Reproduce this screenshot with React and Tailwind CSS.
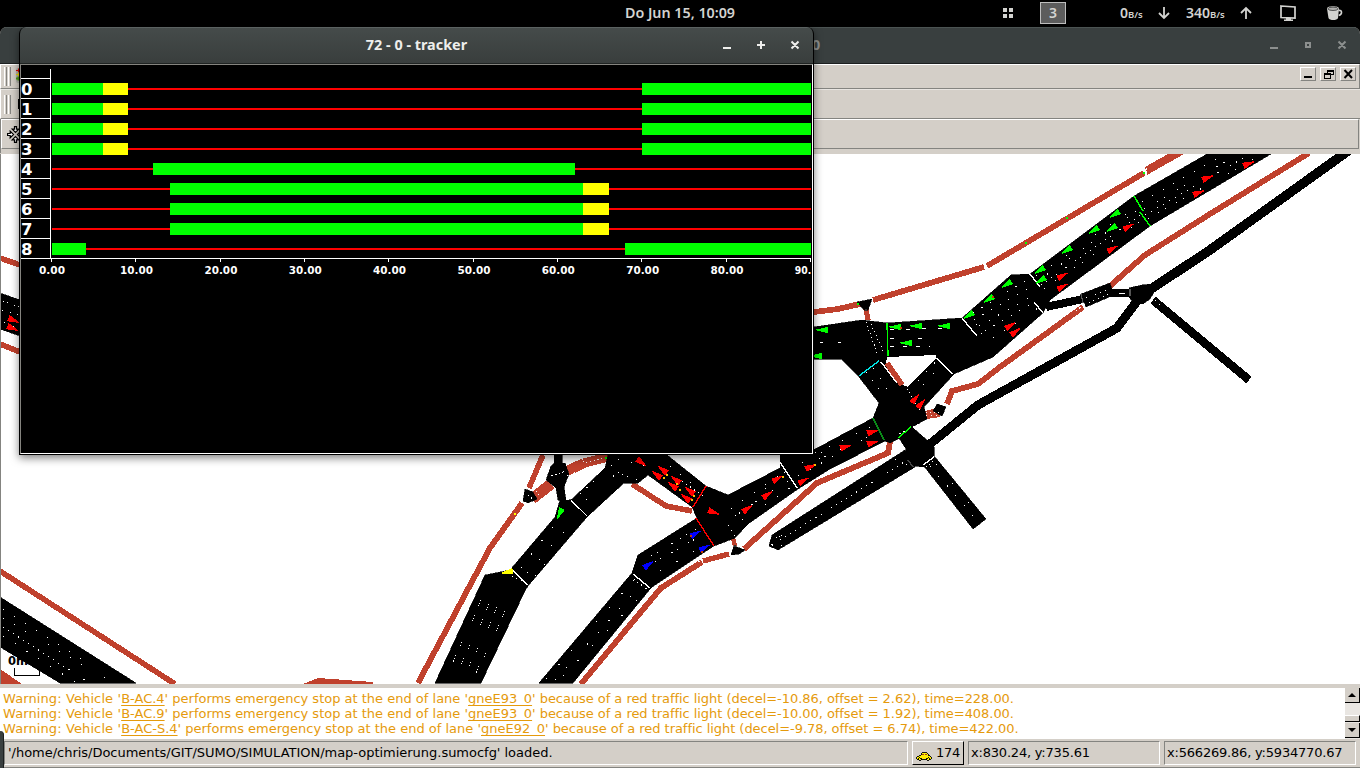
const BIKE = '#c0412d';

const bikeLines = [
  ['1144,173 987,266', 5.8], ['984,267 873,300', 5.8], ['860,304 838,309 814,312', 5.8], ['866,309 868,320', 5.2],
  ['1309,153 1210,214 1145,255 1110,286', 5.8], ['1083,307 1000,367 978,384 952,391 947,404', 5.8],
  ['886,363 902,385', 5.6], ['890,442 888,453 817,483 744,549', 5.8], ['733,538 735,546', 4.5],
  ['729,554 703,561', 5.4], ['702,562 661,588 640,613 581,684', 5.8],
  ['632,484 666,506 692,511', 5.6], ['543,455 529,488', 5.6],
  ['522,503 490,548 468,589 418,683', 5.8], ['532,499 551,484', 11], ['567,471 584,463', 10], ['584,463 608,457', 9],
  ['0,571 175,684', 5.6], ['0,258 20,265', 5.6], ['0,344 20,352', 5.6],
];

const roads = [
  '1207,154 1134,196 1030,274 1011,275 962,318 887,323 862,320 814,327 814,359 841,359 859,377 879,403 873,418 780,468 728,495 706,486 667,455 608,455 605,468 572,499 569,500 560,500 555,517 510,570 485,575 435,683 481,683 525,591 528,586 587,517 624,483 638,483 648,475 692,507 697,518 638,555 632,573 539,683 573,683 651,588 658,583 700,555 714,546 735,538 748,524 798,489 830,469 885,441 890,443 900,438 912,427 927,419 924,407 954,374 993,357 1043,313 1050,300 1150,226 1271,154',
  '780,468 780,454 814,449 814,454',
  '899,438 912,427 928,441 934,447 934,457 924,467 913,466 904,456 906,449',
  '1129,288 1142,285 1152,284 1154,292 1150,299 1143,304 1133,302 1129,297',
  '1081,294 1110,283 1114,295 1086,307',
  '772,535 905,450 915,467 778,550 769,546',
  '923,465 935,457 986,519 973,529',
  '857,302 872,299 868,310 864,310',
  '933,411 937,404 946,407 942,416',
  '525,489 533,492 537,499 528,503 523,501',
  '554,455 562,455 562,463 565,463 569,474 564,487 566,500 558,500 556,488 546,480 551,466 554,463',
  '734,546 745,550 739,554 731,555',
  '0,597 136,683 60,683 0,647',
  '0,293 20,300 20,336 0,329',
];

const thinRoads = [
  ['930,444 978,405 1117,328 1138,300', 9], ['1148,291 1210,250 1348,151', 9.5],
  ['1153,300 1249,380', 8.5], ['1046,307 1083,299', 8], ['1110,293 1131,293', 8.5],
];

/* Lane markings: points and dash pattern */
const lanes = [
  ['1142,202 1220,157', '1 11'], ['1144,209 1235,156', '1 14 1 7'], ['1145,215 1245,157', '1 6'], ['1148,219 1255,158', '1 11 1 7'],
  ['1036,276 1136,207', '1 17'], ['1039,280 1138,210', '1 9 1 16'], ['1041,285 1142,214', '1 5'], ['1044,289 1144,219', '1 13 1 8'],
  ['973,313 1025,281', '1 9'], ['974,320 1030,287', '1 9'], ['979,326 1036,294', '1 10'], ['985,331 1036,301', '1 9'], ['993,338 1038,308', '1 12'],
  ['972,315 982,335', '1 4'], ['866,322 877,353', '1 3'], ['871,324 884,353', '1 3'],
  ['820,343 855,342', '3 15'], ['890,330 942,328', '4 12'], ['890,339 945,338', '4 24'], ['890,347 930,346', '4 9'],
  ['866,372 884,396', '1 9'], ['873,368 890,393', '1 11'], ['907,389 922,413', '1 3'], ['918,381 940,357', '1 11'], ['923,385 944,363', '1 14'],
  ['815,453 876,425', '1 14'], ['819,459 880,432', '1 5 1 16'], ['899,434 925,421', '2 3'],
  ['787,482 838,454', '1 12'], ['784,473 830,448', '1 20'],
  ['731,509 781,474', '1 13'], ['735,516 788,480', '1 4 1 14'], ['742,520 794,485', '1 13'],
  ['728,525 735,537', '1 5'], ['651,556 700,527', '1 6 1 9'], ['655,562 704,534', '1 5 1 12'], ['660,571 709,543', '1 18'],
  ['633,580 650,591', '1 4'], ['546,679 635,579', '1 18'], ['555,680 642,584', '1 15'], ['563,676 648,589', '1 20'],
  ['512,576 526,583', '1 4'], ['521,568 560,517', '1 16'], ['527,573 575,519', '1 17'], ['535,576 548,560', '1 13'],
  ['580,494 599,476', '1 8'], ['586,500 616,474', '1 17'],
  ['481,600 478,606', '1 2'], ['489,604 486,610', '1 2'], ['497,607 494,613', '1 2'], ['505,611 502,617', '1 2'],
  ['475,615 472,621', '1 2'], ['483,619 480,625', '1 2'], ['491,622 488,628', '1 2'], ['499,625 496,631', '1 2'],
  ['462,642 460,646', '1 2'], ['470,645 468,649', '1 2'], ['478,648 476,654', '1 2'], ['486,653 484,657', '1 2'],
  ['456,655 453,662', '1 2'], ['464,658 461,664', '1 2'], ['471,662 469,668', '1 2'], ['479,666 476,673', '1 2'],
  ['611,465 620,474 638,480', '1 4'], ['618,459 650,467', '1 12'], ['551,476 566,471', '2 2'], ['528,495 534,500', '1 3'],
  ['567,476 584,469', '1 3'], ['586,463 606,457', '1 3'],
  ['780,540 906,461', '1 5'], ['776,538 782,535', '1 2'], ['781,546 786,543', '1 2'],
  ['895,459 908,465', '1 3'], ['926,467 934,461', '1 3'], ['930,466 975,518', '1 12'], ['936,464 980,516', '1 24'],
  ['3,609 118,682', '1 12'], ['3,618 112,682', '1 12'], ['3,627 88,682', '1 5'], ['3,636 75,682', '1 13'],
  ['1086,298 1110,289', '1 4'], ['1089,303 1111,293', '1 4'], ['1119,293 1126,293', '6 9'], ['1155,300 1160,305', '2 3'],
  ['3,301 19,307', '1 3'], ['2,310 19,315', '1 7'], ['4,322 18,328', '1 4'],
  ['670,466 700,490', '1 12'], ['682,481 703,496', '1 4'], ['765,489 785,472', '1 17'],
];

const R = '#ff0000';
const G = '#00ff00';
const B = '#0000ff';
const cars = [
  [1248, 164, -22, R], [1207, 178, -22, R], [1198, 193, -22, R], [1128, 227, -30, R], [1112, 249, -30, R], [1062, 276, -30, R], [1062, 287, -30, R],
  [1010, 326, -33, R], [1015, 332, -38, R], [1115, 214, 147, G], [1094, 230, 147, G], [1112, 228, 147, G], [1067, 250, 147, G], [1040, 270, 147, G],
  [1041, 280, 147, G], [1007, 284, 147, G], [989, 299, 147, G], [969, 315, 147, G],
  [823, 330, 180, G], [817, 356, 180, G], [896, 327, 180, G], [917, 326, 180, G], [945, 326, 180, G], [907, 343, 180, G],
  [915, 399, -50, R], [921, 404, -50, R], [872, 432, -18, R], [872, 443, -18, R], [845, 447, -18, R], [810, 467, -25, R],
  [803, 481, -30, R], [777, 479, -30, R], [767, 495, -35, R], [747, 509, -35, R], [713, 512, 20, R],
  [641, 462, 38, R], [663, 470, 218, R], [657, 475, 218, R], [676, 480, 218, R], [673, 486, 218, R], [690, 491, 218, R], [686, 498, 218, R],
  [695, 534, -30, B], [704, 548, -30, B], [648, 565, -35, B], [560, 513, 115, G], [508, 572, 168, '#ffff00'],
  [13, 320, 22, R], [12, 328, 22, R],
];

const stopLines = [
  ['1030,274 1040,287', '#fff'], ['1034,302 1043,313', '#fff'], ['962,318 977,336', '#fff'], ['936,358 953,374', '#fff'],
  ['1134,196 1143,211', G], ['1140,212 1150,226', G], ['887,323 888,356', G], ['859,376 879,361', '#00e5e5'],
  ['873,418 884,440', '#0a8a18'], ['898,438 911,427', G], ['780,462 797,488', '#fff'], ['706,486 693,507', R], ['696,518 714,546', R],
  ['571,500 587,516', '#fff'], ['512,570 528,585', '#fff'], ['633,574 650,588', '#fff'], ['923,465 934,457', '#fff'],
  ['881,362 897,383', '#fff'], ['1081,294 1083,303', '#555'], ['1130,289 1130,296', '#555'], ['908,460 913,467', '#444'],
];

const dots = [
  [1144, 173, G], [1067, 218, G], [1026, 243, G], [858, 304, G], [606, 458, G], [515, 514, '#ffff00'],
  [664, 478, '#ffbf00'], [667, 475, '#ffbf00'], [680, 490, '#ffbf00'], [677, 484, '#ffbf00'], [694, 496, '#ffbf00'], [692, 500, '#ffbf00'],
  [815, 465, '#ffbf00'], [783, 477, '#ffbf00'], [901, 328, '#c33a00'], [993, 297, '#c33a00'], [691, 536, '#c33a00'], [702, 552, '#c33a00'],
  [735, 546, '#333'], [866, 310, '#333'],
];

function RoadMap() {
  return (
    <svg className="block h-[530px] w-[1359px] shrink-0" viewBox="1 154 1359 530" shapeRendering="crispEdges">
      <rect x="1" y="154" width="1359" height="530" fill="#fff" />
      <g fill="none" stroke={BIKE}>
        {bikeLines.map(([p, w], i) => <polyline key={i} points={p} strokeWidth={w} />)}
      </g>
      <g fill={BIKE}>
        <polygon points="1145,167 1168,154 1184,154 1147,175" />
        <polygon points="925,411 938,408 940,417 927,419" />
        <polygon points="0,669 22,684 0,684" />
        <polygon points="303,684 318,678 373,682 373,684" />
      </g>
      {roads.map((p, i) => <polygon key={i} points={p} fill="#000" stroke="#000" strokeWidth="0.6" />)}
      <g fill="none" stroke="#000">
        {thinRoads.map(([p, w], i) => <polyline key={i} points={p} strokeWidth={w} />)}
      </g>
      <polygon points="887,357 936,355 936,358 908,387 903,385 886,363" fill="#fff" />
      <line x1="887" y1="363" x2="902" y2="385" stroke={BIKE} strokeWidth="5.6" />
      <g fill="none" stroke="#fff" strokeWidth="1">
        {lanes.map(([p, d], i) => <polyline key={i} points={p} strokeDasharray={d} />)}
        <polyline points="1146,168 1146,176" strokeDasharray="2 1" />
        <polyline points="926,412 939,412" strokeDasharray="1 3" />
        <polyline points="926,416 939,415" strokeDasharray="1 4" />
        <polyline points="536,491 542,499" strokeDasharray="1 3" />
        <polyline points="698,562 703,559" strokeDasharray="2 2" />
        <polyline points="1076,311 1082,306" strokeDasharray="2 2" />
        <polyline points="769,541 774,547" strokeDasharray="2 2" />
      </g>
      {stopLines.map(([p, c], i) => <polyline key={i} points={p} stroke={c} strokeWidth="1.4" fill="none" />)}
      {cars.map(([x, y, a, c], i) => (
        <polygon key={i} points="-5,-3.2 -3,-2.8 6.5,-0.3 6.5,0.5 -3,2.8 -5,3.2" fill={c} transform={`translate(${x} ${y}) rotate(${a})`} />
      ))}
      {dots.map(([x, y, c], i) => <rect key={i} x={x - 1} y={y - 1} width="2" height="2" fill={c} />)}
      <text x="8" y="665" fontSize="11.5" fontWeight="bold" fontFamily="DejaVu Sans, sans-serif">0m</text>
      <path d="M14.5 668v7.500h25v-7" fill="none" stroke="#000" />
    </svg>
  );
}

/* Signal phases: [start px, end px, colour] */
const fast = [[52, 103, G], [103, 128, '#ffff00'], [642, 811, G]];
const slow = [[170, 583, G], [583, 609, '#ffff00']];
const phases = [fast, fast, fast, fast, [[153, 575, G]], slow, slow, slow, [[52, 86, G], [625, 811, G]]];
const ticks = ['0.00', '10.00', '20.00', '30.00', '40.00', '50.00', '60.00', '70.00', '80.00', '90.'];

function PhaseChart() {
  return (
    <svg className="block h-[388px] w-[791px] shrink-0" viewBox="21 65 791 388" shapeRendering="crispEdges" fontFamily="DejaVu Sans, sans-serif" fontWeight="bold">
      <rect x="21" y="65" width="791" height="388" fill="#000" />
      {phases.map((bars, i) => (
        <g key={i}>
          <rect x="21" y={78 + i * 20} width="30" height="1" fill="#fff" />
          <text x="21" y={95 + i * 20} fontSize="16.5" fill="#fff">{i}</text>
          <rect x="52" y={88 + i * 20} width="759" height="2" fill={R} />
          {bars.map(([a, b, c]) => <rect key={a} x={a} y={83 + i * 20} width={b - a} height="12" fill={c} />)}
        </g>
      ))}
      <rect x="50" y="69" width="1" height="190" fill="#fff" />
      <rect x="21" y="258" width="790" height="1" fill="#fff" />
      {ticks.map((t, i) => (
        <g key={t}>
          <rect x={Math.min(810, Math.floor(51.4 + i * 84.35))} y="259" width="1" height="3" fill="#fff" />
          <text
            x={(i ? 35.7 : 39) + i * 84.35}
            y="274"
            fontSize="10.5"
            fill="#fff"
            textLength={i === 0 ? 26 : i === 9 ? 16.5 : 33}
            lengthAdjust="spacingAndGlyphs"
          >{t}</text>
        </g>
      ))}
    </svg>
  );
}

function TrackerWindow() {
  return (
    <div className="absolute left-[19px] top-[27px] flex h-[428px] w-[795px] flex-col overflow-hidden rounded-t-[7px] border-x border-b border-black bg-black shadow-[0_3px_9px_rgba(0,0,0,0.5)]">
      <div className="relative flex h-[36px] shrink-0 items-center justify-center border-t border-[#5b6261] bg-gradient-to-b from-[#454b4a] to-[#393e3d] text-[14.4px] font-bold text-[#eeeeec]">
        <span className="pb-[2px]">72 - 0 - tracker</span>
        <svg className="absolute right-0 top-0 h-[36px] w-[100px]" viewBox="713 28 100 36" fill="none" stroke="#eeeeec" strokeWidth="2">
          <path d="M723 48h8M757 45h8M761 41v8M791.500 41.500l7 7M798.500 41.500l-7 7" />
        </svg>
      </div>
      <div className="h-px shrink-0 bg-[#1f2322]" />
      <div className="flex h-[390px] border border-b-white border-l-[#85847f] border-r-white border-t-[#85847f]">
        <PhaseChart />
      </div>
    </div>
  );
}

function TopBar() {
  return (
    <div className="relative flex h-[27px] shrink-0 items-center justify-center bg-black text-[14.3px] font-semibold text-[#d3d3d0]">
      <span className="pb-[2px]">Do Jun 15, 10:09</span>
      <div className="absolute left-[1000px] top-0 flex h-[26px] w-[360px] items-center text-[14px]">
        <div className="ml-[3px] grid grid-cols-2 gap-[2px]">
          <i className="size-[4px] bg-[#d3d3d0]" /><i className="size-[4px] bg-[#d3d3d0]" />
          <i className="size-[4px] bg-[#d3d3d0]" /><i className="size-[4px] bg-[#d3d3d0]" />
        </div>
        <div className="ml-[27px] flex h-[22px] w-[26px] items-center justify-center border border-[#bdbdbd] bg-[#5c5c5c] pb-[2px]">3</div>
        <div className="ml-[54px] w-[23px] whitespace-nowrap pb-[2px]">0<span className="text-[9.5px]">B/s</span></div>
        <svg className="ml-[14px] size-[14px]" viewBox="0 0 14 14" fill="none" stroke="#d3d3d0" strokeWidth="1.8"><path d="M7 1v11M2 7l5 5 5-5" /></svg>
        <div className="ml-[15px] w-[39px] whitespace-nowrap pb-[2px]">340<span className="text-[9.5px]">B/s</span></div>
        <svg className="ml-[14px] size-[14px]" viewBox="0 0 14 14" fill="none" stroke="#d3d3d0" strokeWidth="1.8"><path d="M7 13V2M2 7l5-5 5 5" /></svg>
        <svg className="ml-[26px] h-[18px] w-[18px]" viewBox="0 0 18 18">
          <path d="M2 2l14 1v11l-14-.5z" fill="none" stroke="#d3d3d0" strokeWidth="1.7" />
          <path d="M7 14h5v1.500h2v1.500H5v-1.500h2z" fill="#d3d3d0" />
        </svg>
        <svg className="ml-[29px] h-[18px] w-[18px]" viewBox="0 0 18 18">
          <path d="M1 4.500C1 1.500 13 1.500 13 4.500L12 14c-1 2.800-8.500 2.800-9.500 0z" fill="#d3d3d0" />
          <ellipse cx="7" cy="4.800" rx="5" ry="1.700" fill="#b0b0ae" stroke="#333" strokeWidth=".8" />
          <path d="M12.500 6.500c4-1 4 4 .2 5" fill="none" stroke="#d3d3d0" strokeWidth="1.600" />
        </svg>
      </div>
    </div>
  );
}

function Grip() {
  return (
    <div className="flex h-[19px] gap-px">
      <i className="w-[3px] border-l border-r border-l-white border-r-[#848480]" />
      <i className="w-[3px] border-l border-r border-l-white border-r-[#848480]" />
    </div>
  );
}

function MdiButton({ children }) {
  return (
    <div className="flex h-[14px] w-[16px] border border-b-[#848480] border-l-white border-r-[#848480] border-t-white">
      <svg className="h-[12px] w-[14px]" viewBox="0 0 14 12">{children}</svg>
    </div>
  );
}

function Messages() {
  const rows = [
    ['B-AC.4', 'gneE93_0', '-10.86', '2.62', '228.00'],
    ['B-AC.9', 'gneE93_0', '-10.00', '1.92', '408.00'],
    ['B-AC-S.4', 'gneE92_0', '-9.78', '6.74', '422.00'],
  ];
  const link = 'underline underline-offset-[2px] [text-decoration-skip-ink:none] decoration-1';
  return (
    <div className="flex h-[51px] shrink-0 bg-white">
      <div className="flex-1 overflow-hidden whitespace-nowrap pl-[3px] pt-[3px] font-['DejaVu_Sans',sans-serif] text-[13px] leading-[15px] text-[#e59a0c]">
        {rows.map(([v, l, d, o, t]) => (
          <div key={t}>
            <span className="tracking-[0.11px]">Warning: Vehicle '</span><span className={link}>{v}</span>' performs emergency stop at the end of lane '<span className={link}>{l}</span><span className="tracking-[-0.045px]">' because of a red traffic light (decel={d}, offset = {o}), time={t}.</span>
          </div>
        ))}
      </div>
      <div className="flex w-[15px] flex-col bg-[#e9e6e2]">
        <div className="flex h-[15px] items-center justify-center border-b border-r border-black bg-[#d4cfc8]">
          <svg className="h-[4px] w-[8px]" viewBox="0 0 8 4"><path d="M0 4L4 0l4 4z" /></svg>
        </div>
        <div className="mt-[12px] h-[7px] border-b border-r border-t border-b-black border-r-black border-t-white bg-[#d4cfc8]" />
        <div className="mt-px flex h-[15px] items-center justify-center border-b border-r border-black bg-[#d4cfc8]">
          <svg className="h-[4px] w-[8px]" viewBox="0 0 8 4"><path d="M0 0h8L4 4z" /></svg>
        </div>
      </div>
    </div>
  );
}

function StatusBar() {
  const field = 'flex h-[24px] items-center whitespace-nowrap border border-b-white border-l-[#848480] border-r-white border-t-[#848480]';
  return (
    <div className="relative flex h-[29px] shrink-0 items-start border-b border-[#848480] pl-[4px] pt-[2px] font-['DejaVu_Sans',sans-serif] text-[13px] text-black">
      <i className="absolute left-0 top-[-8px] h-[37px] w-[4px] rounded-tr-[4px] border-r border-[#1d2020] bg-[#393f3f]" />
      <div className={`${field} w-[904px] pl-[3px] tracking-[-0.02px]`}>'/home/chris/Documents/GIT/SUMO/SIMULATION/map-optimierung.sumocfg' loaded.</div>
      <div className="ml-[4px] flex h-[24px] w-[52px] items-center border border-b-black border-l-white border-r-black border-t-white pl-[3px]">
        <svg className="mt-[7px] h-[9px] w-[16px]" viewBox="0 0 17 10" shapeRendering="crispEdges">
          <path d="M.5 7V5.500L5 3.500 6.500 1h5L14 4l2.500 1.500V8H.5z" fill="#ffee00" stroke="#000" />
          <path d="M6 3.500L7 2h1.500v1.500zM10 2h1.500l1 1.500H10z" fill="#a33b20" />
          <circle cx="4" cy="8" r="1.500" fill="#ffee00" stroke="#000" /><circle cx="13" cy="8" r="1.500" fill="#ffee00" stroke="#000" />
        </svg>
        <span className="ml-[4px] tracking-[-0.25px]">174</span>
      </div>
      <div className={`${field} ml-[4px] w-[192px] pl-[2px] tracking-[-0.2px]`}>x:830.24, y:735.61</div>
      <div className={`${field} ml-[4px] w-[192px] pl-[2px] tracking-[-0.2px]`}>x:566269.86, y:5934770.67</div>
    </div>
  );
}

export default function App() {
  return (
    <div className="relative flex h-[768px] w-[1360px] flex-col overflow-hidden bg-black font-['Noto_Sans',sans-serif]">
      <TopBar />
      <div className="flex h-[741px] flex-col overflow-hidden rounded-t-[7px] bg-[#d4cfc8]">
        <div className="relative flex h-[37px] shrink-0 items-center border-b border-t border-b-[#1d2020] border-t-[#4b5352] bg-[#393f3f] text-[14.4px] font-bold text-[#8c8f8e]">
          <span className="ml-[812px] pb-[2px]">0</span>
          <svg className="absolute right-0 top-0 h-[36px] w-[100px]" viewBox="1260 28 100 36" fill="none" stroke="#8c8f8e" strokeWidth="2">
            <path d="M1270 48h8M1306 43h4v4h-4zM1338.500 41.500l7 7M1345.500 41.500l-7 7" />
          </svg>
        </div>
        <div className="flex h-[25px] shrink-0 items-start border-b border-l border-r border-t border-b-[#848480] border-l-white border-r-[#848480] border-t-white pl-[3px] pt-[2px]">
          <Grip />
          <svg className="ml-[4px] h-[18px] w-[8px]" viewBox="0 0 8 18">
            <rect x="1" y="1" width="8" height="15" rx="2" fill="#b4b4ae" />
            <path d="M1 3.500h5M3.500 1.500v4" stroke="#e00000" /><path d="M1 7.500h6M3.500 5.500v4" stroke="#ecd800" /><path d="M1 11.500h6M3.500 9.500v4" stroke="#4a9a10" strokeWidth="2" />
          </svg>
          <div className="ml-auto mr-[3px] flex gap-[4px]">
            <MdiButton><path d="M3 8h8v2H3z" /></MdiButton>
            <MdiButton>
              <path d="M6 2h7v5H6z" /><path d="M7 4h5v2H7z" fill="#d4cfc8" />
              <path d="M3 5h7v6H3z" /><path d="M4 7h5v3H4z" fill="#d4cfc8" />
            </MdiButton>
            <MdiButton><path d="M3.500 2l7.500 8M11 2l-7.500 8" fill="none" stroke="#000" strokeWidth="2" /></MdiButton>
          </div>
        </div>
        <div className="flex h-[30px] shrink-0 items-center border-b border-l border-t border-b-[#848480] border-l-white border-t-[#e8e5e1] pl-[3px]">
          <Grip />
          <i className="ml-[7px] h-[10px] w-[4px] bg-black" />
        </div>
        <div className="h-[34px] shrink-0 border-l border-[#848480]">
          <div className="flex h-[30px] w-[1358px] items-center border border-b-[#848480] border-l-white border-r-[#848480] border-t-white pl-[5px]">
            <svg className="size-[17px]" viewBox="0 0 17 17" fill="#fff" stroke="#000" strokeWidth="1.2">
              {[0, 90, 180, 270].map((a) => (
                <path key={a} d="M7.500 .6h2V3.200h2.300L8.500 6.500 5.200 3.200H7.500z" transform={`rotate(${a} 8.5 8.5)`} />
              ))}
            </svg>
          </div>
        </div>
        <div className="mt-px flex h-[530px] shrink-0 border-l border-[#848480]">
          <RoadMap />
        </div>
        <div className="h-[4px] shrink-0" />
        <Messages />
        <StatusBar />
      </div>
      <TrackerWindow />
    </div>
  );
}
